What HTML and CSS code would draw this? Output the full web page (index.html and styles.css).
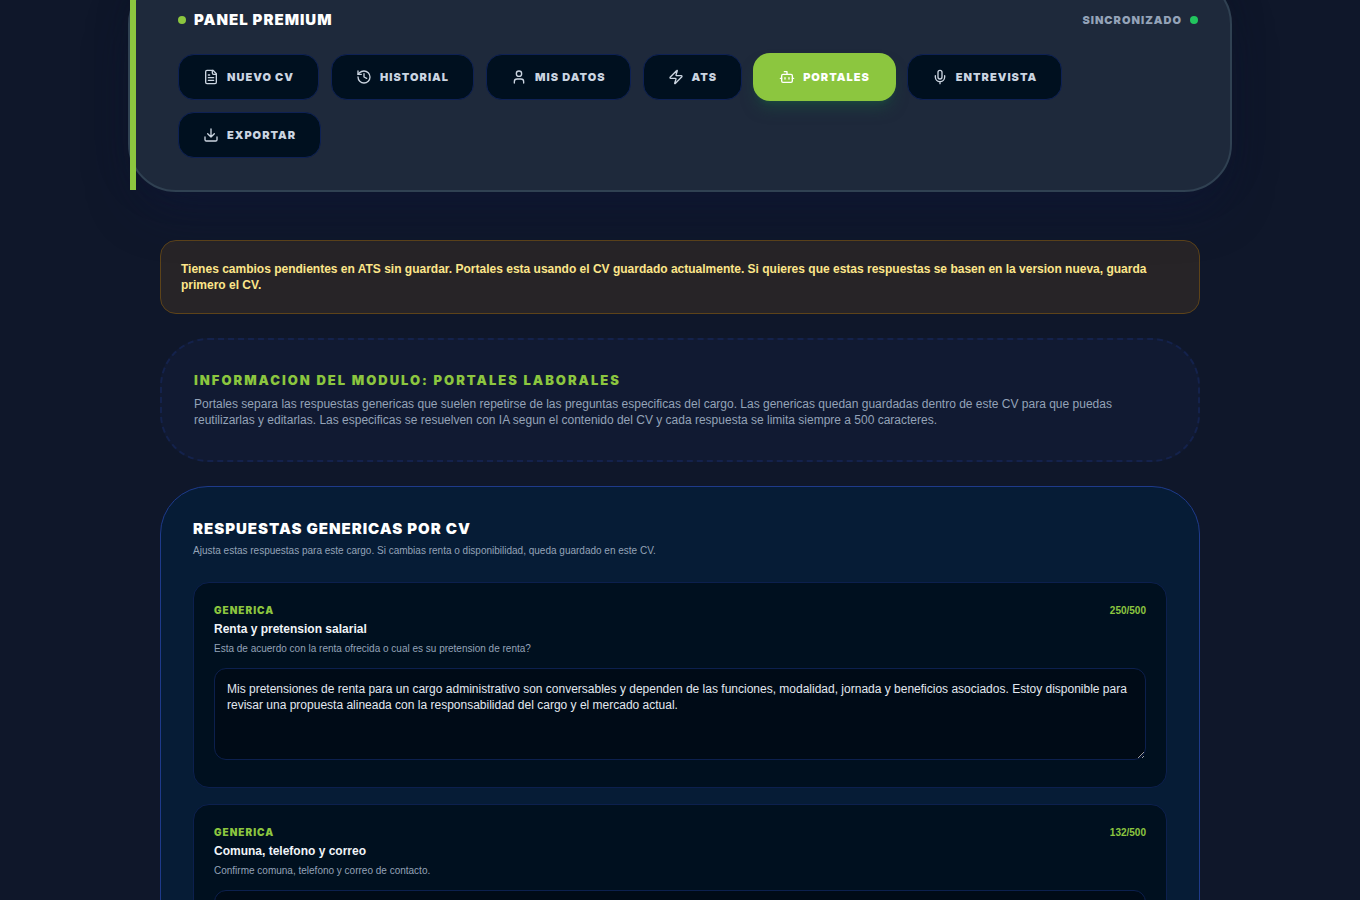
FILE: index.html
```html
<!DOCTYPE html>
<html lang="es">
<head>
<meta charset="utf-8">
<meta name="viewport" content="width=device-width, initial-scale=1">
<title>Portales laborales</title>
<link rel="stylesheet" href="styles.css">
</head>
<body>
<div class="page">
  <header class="panel">
    <div class="panel-head">
      <h1 class="panel-title"><span class="dot"></span>Panel Premium</h1>
      <p class="sync">Sincronizado<span class="dot dot-ok"></span></p>
    </div>
    <nav class="tabs" aria-label="Modulos">
      <button type="button" class="tab"><svg class="icon" viewBox="0 0 24 24"><path d="M15 2H6a2 2 0 0 0-2 2v16a2 2 0 0 0 2 2h12a2 2 0 0 0 2-2V7Z"/><path d="M14 2v4a2 2 0 0 0 2 2h4M10 9H8M16 13H8M16 17H8"/></svg>Nuevo CV</button>
      <button type="button" class="tab"><svg class="icon" viewBox="0 0 24 24"><path d="M3 12a9 9 0 1 0 9-9 9.75 9.75 0 0 0-6.74 2.74L3 8"/><path d="M3 3v5h5M12 7v5l4 2"/></svg>Historial</button>
      <button type="button" class="tab"><svg class="icon" viewBox="0 0 24 24"><path d="M19 21v-2a4 4 0 0 0-4-4H9a4 4 0 0 0-4 4v2"/><circle cx="12" cy="7" r="4"/></svg>Mis datos</button>
      <button type="button" class="tab"><svg class="icon" viewBox="0 0 24 24"><path d="M4 14a1 1 0 0 1-.78-1.63l9.9-10.2a.5.5 0 0 1 .86.46l-1.92 6.02A1 1 0 0 0 13 10h7a1 1 0 0 1 .78 1.63l-9.9 10.2a.5.5 0 0 1-.86-.46l1.92-6.02A1 1 0 0 0 11 14z"/></svg>ATS</button>
      <button type="button" class="tab tab-active" aria-current="page"><svg class="icon" viewBox="0 0 24 24"><path d="M12 8V4H8"/><rect x="4" y="8" width="16" height="12" rx="2"/><path d="M2 14h2M20 14h2M15 13v2M9 13v2"/></svg>Portales</button>
      <button type="button" class="tab"><svg class="icon" viewBox="0 0 24 24"><path d="M12 2a3 3 0 0 0-3 3v7a3 3 0 0 0 6 0V5a3 3 0 0 0-3-3Z"/><path d="M19 10v2a7 7 0 0 1-14 0v-2M12 19v3"/></svg>Entrevista</button>
      <button type="button" class="tab"><svg class="icon" viewBox="0 0 24 24"><path d="M21 15v4a2 2 0 0 1-2 2H5a2 2 0 0 1-2-2v-4M7 10l5 5 5-5M12 15V3"/></svg>Exportar</button>
    </nav>
  </header>

  <main class="content">
    <p class="notice" role="status">Tienes cambios pendientes en ATS sin guardar. Portales esta usando el CV guardado actualmente. Si quieres que estas respuestas se basen en la version nueva, guarda primero el CV.</p>

    <section class="info">
      <h2 class="info-title">Informacion del modulo: Portales laborales</h2>
      <p class="info-text">Portales separa las respuestas genericas que suelen repetirse de las preguntas especificas del cargo. Las genericas quedan guardadas dentro de este CV para que puedas reutilizarlas y editarlas. Las especificas se resuelven con IA segun el contenido del CV y cada respuesta se limita siempre a 500 caracteres.</p>
    </section>

    <section class="answers">
      <div class="answers-head">
        <h2 class="answers-title">Respuestas genericas por CV</h2>
        <p class="hint">Ajusta estas respuestas para este cargo. Si cambias renta o disponibilidad, queda guardado en este CV.</p>
      </div>
      <article class="card">
        <div class="card-head">
          <div class="card-text">
            <p class="tag">Generica</p>
            <label class="card-title" for="renta">Renta y pretension salarial</label>
            <p class="hint">Esta de acuerdo con la renta ofrecida o cual es su pretension de renta?</p>
          </div>
          <span class="count">250/500</span>
        </div>
        <textarea class="answer" id="renta">Mis pretensiones de renta para un cargo administrativo son conversables y dependen de las funciones, modalidad, jornada y beneficios asociados. Estoy disponible para revisar una propuesta alineada con la responsabilidad del cargo y el mercado actual.</textarea>
      </article>
      <article class="card">
        <div class="card-head">
          <div class="card-text">
            <p class="tag">Generica</p>
            <label class="card-title" for="contacto">Comuna, telefono y correo</label>
            <p class="hint">Confirme comuna, telefono y correo de contacto.</p>
          </div>
          <span class="count">132/500</span>
        </div>
        <textarea class="answer" id="contacto"></textarea>
      </article>
    </section>
  </main>
</div>
</body>
</html>
```
FILE: styles.css
```css
*, *::before, *::after { box-sizing: border-box; }
html { scrollbar-width: none; background: #0f172a; }
body {
  margin: 0;
  overflow-x: hidden;
  background: #0f172a;
  color: #fff;
  font-family: "Liberation Sans", Arial, sans-serif;
  font-size: 12px;
  line-height: 16px;
}
h1, h2, p { margin: 0; }
.page { max-width: 1104px; margin: -24px auto 0; padding-bottom: 48px; }

.panel {
  position: relative;
  padding: 32px 32px 32px 48px;
  border: 2px solid #304152;
  border-radius: 48px;
  background: #1e293b;
  box-shadow: 0 25px 50px -12px rgba(15, 23, 64, 0.5), 0 0 32px rgba(10, 16, 28, 0.3);
}
.panel::before {
  content: "";
  position: absolute;
  left: 0;
  top: 0;
  bottom: 0;
  width: 6px;
  background: #8cc63f;
}
.panel-head { display: flex; justify-content: space-between; align-items: center; margin-bottom: 24px; }
.panel-title, .sync { display: flex; align-items: center; gap: 8px; text-transform: uppercase; font-family: Inter, sans-serif; font-weight: 900; }
.panel-title { font-size: 15px; line-height: 20px; letter-spacing: 1px; }
.sync { color: #94a3b8; font-size: 11px; line-height: 15px; letter-spacing: 1px; }
.dot { width: 8px; height: 8px; border-radius: 50%; background: #8cc63f; }
.dot-ok { background: #22c55e; }

.tabs { display: flex; flex-wrap: wrap; gap: 12px; }
.tab {
  display: flex;
  align-items: center;
  gap: 8px;
  height: 46px;
  padding: 0 24px;
  border: 1px solid #0e2154;
  border-radius: 16px;
  background: #00101f;
  color: #cbd5e1;
  font-family: Inter, sans-serif;
  font-size: 11px;
  font-weight: 900;
  line-height: 15px;
  letter-spacing: 1px;
  text-transform: uppercase;
  cursor: pointer;
}
.tab-active {
  border-color: #8cc63f;
  background: #8cc63f;
  color: #fff;
  box-shadow: 0 0 0 1px #8cc63f, 0 10px 15px -3px rgba(26, 92, 66, 0.5), 0 4px 6px -4px rgba(26, 92, 66, 0.8);
}
.icon { width: 16px; height: 16px; fill: none; stroke: currentColor; stroke-width: 2; stroke-linecap: round; stroke-linejoin: round; }

.content { display: flex; flex-direction: column; gap: 24px; padding: 0 32px; margin-top: 48px; }
.notice {
  padding: 20px;
  border: 1px solid #5d4319;
  border-radius: 16px;
  background: #272427;
  color: #fde68a;
  font-weight: 700;
}
.info { padding: 32px; border: 2px dashed #14224c; border-radius: 48px; background: #111a32; }
.info-title { margin-bottom: 8px; color: #8cc63f; font: 900 13px/16px Inter, sans-serif; letter-spacing: 2px; text-transform: uppercase; }
.info-text { color: #94a3b8; }

.answers { display: flex; flex-direction: column; gap: 16px; padding: 32px; border: 1px solid #1e3a8a; border-radius: 48px; background: #061c36; }
.answers-head { margin-bottom: 8px; }
.answers-title { margin-bottom: 4px; font: 900 15px/20px Inter, sans-serif; letter-spacing: 1px; text-transform: uppercase; }
.hint { color: #94a3b8; font-size: 10px; line-height: 15px; }
.card { padding: 20px 20px 27px; border: 1px solid #0c204e; border-radius: 16px; background: #00101f; }
.card-head { display: flex; justify-content: space-between; align-items: flex-start; gap: 12px; margin-bottom: 12px; }
.card-text { display: flex; flex-direction: column; gap: 4px; }
.tag { color: #8cc63f; font: 900 10px/14px Inter, sans-serif; letter-spacing: 1px; text-transform: uppercase; }
.card-title { color: #f1f5f9; font-weight: 700; }
.count { color: #8cc63f; font-size: 10px; font-weight: 700; line-height: 15px; }
.answer {
  display: block;
  width: 100%;
  height: 92px;
  padding: 12px;
  border: 1px solid #0c204e;
  border-radius: 12px;
  background: #000b17;
  color: #e2e8f0;
  font: inherit;
  resize: vertical;
}
```
